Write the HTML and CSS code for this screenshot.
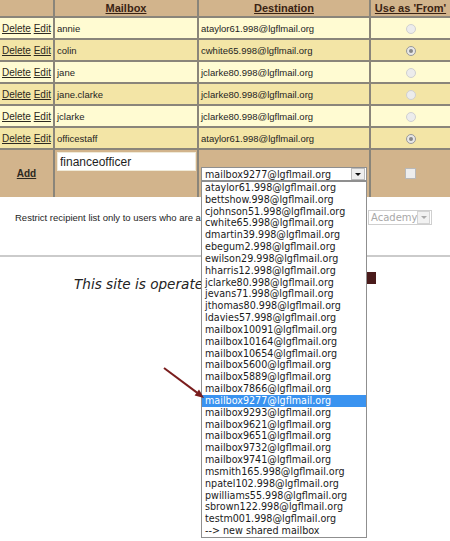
FILE: index.html
```html
<!DOCTYPE html>
<html>
<head>
    <title>Shared Mailboxes</title>
    <link rel="stylesheet" href="styles.css">
</head>
<body>
    <table class="mailboxes">
        <colgroup>
            <col class="col-actions">
            <col class="col-mailbox">
            <col class="col-dest">
            <col class="col-from">
        </colgroup>
        <tr class="head">
            <th></th>
            <th><a href="#">Mailbox</a></th>
            <th><a href="#">Destination</a></th>
            <th><a href="#">Use as 'From'</a></th>
        </tr>
        <tr class="light">
            <td class="actions"><a href="#">Delete</a> <a href="#">Edit</a></td>
            <td>annie</td>
            <td>ataylor61.998@lgflmail.org</td>
            <td class="from"><span class="radio"></span></td>
        </tr>
        <tr class="dark">
            <td class="actions"><a href="#">Delete</a> <a href="#">Edit</a></td>
            <td>colin</td>
            <td>cwhite65.998@lgflmail.org</td>
            <td class="from"><span class="radio checked"></span></td>
        </tr>
        <tr class="light">
            <td class="actions"><a href="#">Delete</a> <a href="#">Edit</a></td>
            <td>jane</td>
            <td>jclarke80.998@lgflmail.org</td>
            <td class="from"><span class="radio"></span></td>
        </tr>
        <tr class="dark">
            <td class="actions"><a href="#">Delete</a> <a href="#">Edit</a></td>
            <td>jane.clarke</td>
            <td>jclarke80.998@lgflmail.org</td>
            <td class="from"><span class="radio"></span></td>
        </tr>
        <tr class="light">
            <td class="actions"><a href="#">Delete</a> <a href="#">Edit</a></td>
            <td>jclarke</td>
            <td>jclarke80.998@lgflmail.org</td>
            <td class="from"><span class="radio"></span></td>
        </tr>
        <tr class="dark">
            <td class="actions"><a href="#">Delete</a> <a href="#">Edit</a></td>
            <td>officestaff</td>
            <td>ataylor61.998@lgflmail.org</td>
            <td class="from"><span class="radio checked"></span></td>
        </tr>
        <tr class="add">
            <td class="add-link"><a href="#">Add</a></td>
            <td class="add-name"><input type="text" class="name-input" value="financeofficer"></td>
            <td class="add-dest">
                <div class="combo">
                    <div class="combo-box">
                        <span>mailbox9277@lgflmail.org</span>
                        <span class="combo-btn"><span class="tri"></span></span>
                    </div>
                    <ul class="combo-list">
                        <li>ataylor61.998@lgflmail.org</li>
                        <li>bettshow.998@lgflmail.org</li>
                        <li>cjohnson51.998@lgflmail.org</li>
                        <li>cwhite65.998@lgflmail.org</li>
                        <li>dmartin39.998@lgflmail.org</li>
                        <li>ebegum2.998@lgflmail.org</li>
                        <li>ewilson29.998@lgflmail.org</li>
                        <li>hharris12.998@lgflmail.org</li>
                        <li>jclarke80.998@lgflmail.org</li>
                        <li>jevans71.998@lgflmail.org</li>
                        <li>jthomas80.998@lgflmail.org</li>
                        <li>ldavies57.998@lgflmail.org</li>
                        <li>mailbox10091@lgflmail.org</li>
                        <li>mailbox10164@lgflmail.org</li>
                        <li>mailbox10654@lgflmail.org</li>
                        <li>mailbox5600@lgflmail.org</li>
                        <li>mailbox5889@lgflmail.org</li>
                        <li>mailbox7866@lgflmail.org</li>
                        <li class="selected">mailbox9277@lgflmail.org</li>
                        <li>mailbox9293@lgflmail.org</li>
                        <li>mailbox9621@lgflmail.org</li>
                        <li>mailbox9651@lgflmail.org</li>
                        <li>mailbox9732@lgflmail.org</li>
                        <li>mailbox9741@lgflmail.org</li>
                        <li>msmith165.998@lgflmail.org</li>
                        <li>npatel102.998@lgflmail.org</li>
                        <li>pwilliams55.998@lgflmail.org</li>
                        <li>sbrown122.998@lgflmail.org</li>
                        <li>testm001.998@lgflmail.org</li>
                        <li>--&gt; new shared mailbox</li>
                    </ul>
                </div>
            </td>
            <td class="from"><span class="checkbox"></span></td>
        </tr>
    </table>

    <div class="restrict">
        <span>Restrict recipient list only to users who are a member of</span>
        <span class="academy">Academy<span class="academy-btn"><span class="tri"></span></span></span>
    </div>

    <div class="divider"></div>

    <div class="footer">
        <span class="footer-text">This site is operated by</span>
        <span class="logo"></span>
    </div>

    <!-- pointer to the highlighted option -->
    <svg class="pointer" width="450" height="541" viewBox="0 0 450 541">
        <line x1="164" y1="368" x2="197" y2="392.6" stroke="#7a1d1d" stroke-width="2"/>
        <polygon points="204,398 194.6,395.6 199,389.6" fill="#7a1d1d"/>
    </svg>
</body>
</html>
```

FILE: styles.css
```css
body { margin: 0; height: 541px; overflow: hidden; position: relative; background: #fff; font-family: "Liberation Sans", Arial, sans-serif; font-size: 9.5px; color: #1e1e1e; }

/* mailbox table */
.mailboxes { width: 450px; table-layout: fixed; border-collapse: collapse; border-style: hidden; }
.col-actions { width: 54px; }
.col-mailbox { width: 144px; }
.col-dest { width: 172px; }
.col-from { width: 80px; }
.mailboxes th, .mailboxes td { border: 2px solid #8a857a; padding: 0 2px; white-space: nowrap; text-align: left; }
.mailboxes a { color: #2c2820; text-decoration: underline; }
.head th { height: 16px; background: #d2b48c; font-size: 11px; text-align: center; }
.head th a { color: #3a2313; font-weight: bold; }
.light td { height: 20px; background: #fffbd2; }
.dark td { height: 20px; background: #f3e5a6; }
.actions { padding-left: 3px; font-size: 10px; }
.from { text-align: center !important; }

.radio { display: inline-block; width: 8px; height: 8px; border: 1px solid #d0d0d0; border-radius: 50%; background: #ececec; vertical-align: middle; position: relative; }
.radio.checked { border-color: #999; background: #e6e6e6; }
.radio.checked::after { content: ""; position: absolute; left: 2px; top: 2px; width: 4px; height: 4px; border-radius: 50%; background: #888; }
.checkbox { display: inline-block; width: 9px; height: 9px; border: 1px solid #b8b8b8; background: #ededed; vertical-align: middle; }

/* add row */
.add td { height: 45px; background: #d2b48c; vertical-align: middle; }
.add-link { text-align: center !important; font-weight: bold; font-size: 10px; }
.add-name { vertical-align: top !important; padding-top: 2px !important; }
.name-input { box-sizing: border-box; width: 139px; height: 19px; margin: 0; padding: 0 2px; border: 1px solid #f0ead8; background: #fff; font-family: "Liberation Sans", Arial, sans-serif; font-size: 12px; color: #1e1e1e; }
.add-dest { padding: 0 !important; }

.combo { position: relative; margin-left: 2px; width: 166px; font-family: "DejaVu Sans", Verdana, sans-serif; font-size: 9.6px; color: #1b1b1b; }
.combo-box { box-sizing: border-box; height: 14px; display: flex; align-items: center; justify-content: space-between; padding: 0 1px 0 3px; border: 1px solid #8f8f8f; background: #fff; margin-top: 1px; }
.combo-btn { width: 12px; height: 10px; border: 1px solid #bcbcbc; background: #eeeeee; display: flex; align-items: center; justify-content: center; }
.tri { width: 0; height: 0; border-left: 3px solid transparent; border-right: 3px solid transparent; border-top: 3px solid #111; }
.combo-list { position: absolute; top: 100%; left: 0; z-index: 2; box-sizing: border-box; width: 166px; margin: 0; padding: 0; list-style: none; border: 1px solid #8f8f8f; background: #fff; line-height: 11.83px; }
.combo-list li { padding-left: 3px; white-space: nowrap; }
.combo-list .selected { background: #3a93f0; color: #fff; }

/* restrict row */
.restrict { display: flex; align-items: center; justify-content: space-between; height: 15px; margin-top: 13px; padding: 0 18px 0 15px; }
.academy { box-sizing: border-box; width: 64px; height: 15px; display: flex; align-items: center; justify-content: space-between; padding: 0 1px 0 2px; border: 1px solid #cfcfcf; font-family: "DejaVu Sans", Verdana, sans-serif; font-size: 10px; color: #a8a8a8; }
.academy-btn { width: 11px; height: 11px; border: 1px solid #d4d4d4; background: #f2f2f2; display: flex; align-items: center; justify-content: center; }
.academy-btn .tri { border-top-color: #aaa; }

.divider { margin-top: 30px; border-top: 2px solid #cbcbcb; }

/* footer */
.footer { display: flex; align-items: flex-start; justify-content: space-between; margin-top: 15px; padding: 0 74px; }
.footer-text { margin-top: 4px; font-family: "DejaVu Sans", Verdana, sans-serif; font-style: italic; font-size: 13.6px; line-height: 16px; color: #222; }
.logo { width: 22px; height: 12px; background: #4a1b1b; }

.pointer { position: absolute; left: 0; top: 0; z-index: 3; pointer-events: none; }
```
